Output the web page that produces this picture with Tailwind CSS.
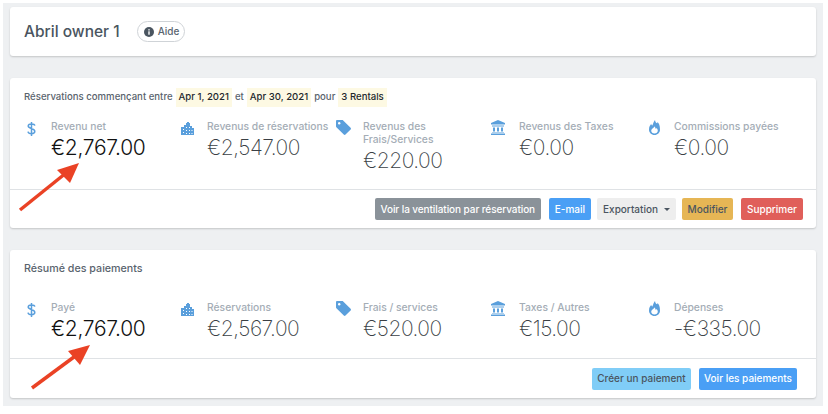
<!doctype html>
<html lang="fr">
<head>
<meta charset="utf-8">
<title>Abril owner 1</title>
<script src="https://cdn.jsdelivr.net/npm/@tailwindcss/browser@4"></script>
</head>
<body class="bg-white">
<div class="relative w-[828px] h-[414px] overflow-hidden bg-white font-['Inter',sans-serif]">
  <main class="ml-[3px] mt-[3px] w-[820px] h-[403px] bg-[#eef0f2] pl-[7px] pr-[7px] pt-[4px]">

    <!-- header -->
    <section class="h-[49px] rounded-[3px] bg-white shadow-[0_1px_2px_rgba(0,0,0,0.18)] flex items-center pl-[14px]">
      <h1 class="text-[15.5px] font-medium text-[#4a5560] leading-none">Abril owner 1</h1>
      <span class="ml-[17px] h-[21px] w-[48px] pl-[6px] rounded-full border border-[#cfd3d7] flex items-center gap-[4px] text-[10px] font-medium text-[#5a6570]">
        <svg class="w-[10px] h-[10px]" viewBox="0 0 10 10"><circle cx="5" cy="5" r="5" fill="#4a5560"/><rect x="4.3" y="4.3" width="1.4" height="3.4" fill="#fff"/><rect x="4.3" y="2.2" width="1.4" height="1.3" fill="#fff"/></svg>
        Aide
      </span>
    </section>

    <!-- reservations -->
    <section class="mt-[22px] h-[150px] rounded-[3px] bg-white shadow-[0_1px_2px_rgba(0,0,0,0.18)] flex flex-col">
      <div class="h-[112px] border-b border-[#dfe2e5] pl-[14px]">
        <p class="pt-[10px] flex items-center text-[9.6px] font-medium text-[#59636d] h-[29px]">
          <span>Réservations commençant entre</span>
          <span class="ml-[3px] px-[3px] py-[2px] bg-[#fdf9e3] text-[#23282d]">Apr 1, 2021</span>
          <span class="mx-[3px]">et</span>
          <span class="px-[3px] py-[2px] bg-[#fdf9e3] text-[#23282d]">Apr 30, 2021</span>
          <span class="mx-[3px]">pour</span>
          <span class="px-[3px] py-[2px] bg-[#fdf9e3] text-[#23282d]">3 Rentals</span>
        </p>
        <div class="mt-[13px] flex">
          <div class="w-[156px] flex">
            <div class="w-[27px] pl-[3px] pt-[2px]"><svg class="w-[9px] h-[14px]" viewBox="0 0 9 14"><path d="M7.8 3.6C7.6 2.4 6.3 1.900 4.500 1.900 2.600 1.900 1.200 2.700 1.200 4.100c0 3 6.600 1.600 6.600 5.200 0 1.500-1.500 2.400-3.300 2.400-1.900 0-3.200-.7-3.500-2.100M4.500 0v14" fill="none" stroke="#5a9fdc" stroke-width="1.500"/></svg></div>
            <div><p class="text-[10.3px] font-medium text-[#a4adb6] leading-[13px]">Revenu net</p><p class="mt-[1px] text-[21px] font-light text-[#111] leading-[28px] tracking-[-0.3px]">€2,767.00</p></div>
          </div>
          <div class="w-[156px] flex">
            <div class="w-[27px] pl-[1px] pt-[2px]"><svg class="w-[13px] h-[13px]" viewBox="0 0 13 13"><path fill="#5a9fdc" d="M0 5h3V3h2V1h1V0h2v1h1v3h2v2h2v7H0z"/><path fill="#fff" d="M2 7h1v1H2zm0 3h1v1H2zm3-5h1v1H5zm0 3h1v1H5zm0 3h1v1H5zm3-6h1v1H8zm0 3h1v1H8zm0 3h1v1H8zm2.500-3h1v1h-1zm0 3h1v1h-1z"/></svg></div>
            <div><p class="text-[10.3px] font-medium text-[#a4adb6] leading-[13px] whitespace-nowrap">Revenus de réservations</p><p class="mt-[1px] text-[21px] font-extralight text-[#3a3f45] leading-[28px] tracking-[-0.5px]">€2,547.00</p></div>
          </div>
          <div class="w-[155px] flex">
            <div class="w-[27px]"><svg class="w-[15px] h-[15px]" viewBox="0 0 15 15"><path fill="#5a9fdc" d="M0 1.200C0 .5.500 0 1.200 0h5c.4 0 .7.100 1 .4l7.400 7.400c.5.500.5 1.200 0 1.700l-5.100 5.100c-.5.500-1.200.5-1.700 0L.4 7.200C.1 6.900 0 6.600 0 6.200z"/><circle cx="3.200" cy="3.200" r="1.200" fill="#fff"/></svg></div>
            <div><p class="text-[10.3px] font-medium text-[#a4adb6] leading-[13px]">Revenus des<br>Frais/Services</p><p class="mt-[1px] text-[21px] font-extralight text-[#3a3f45] leading-[28px] tracking-[-0.5px]">€220.00</p></div>
          </div>
          <div class="w-[156px] flex">
            <div class="w-[28px]"><svg class="w-[14px] h-[15px]" viewBox="0 0 14 15"><path fill="#5a9fdc" d="M7 0l7 3v1.500H0V3zM1 5.500h12v1H1zM2 7.500h2v4H2zM6 7.500h2v4H6zM10 7.500h2v4h-2zM1 12.500h12V13H1zM0 13.500h14V15H0z"/></svg></div>
            <div><p class="text-[10.3px] font-medium text-[#a4adb6] leading-[13px]">Revenus des Taxes</p><p class="mt-[1px] text-[21px] font-extralight text-[#3a3f45] leading-[28px] tracking-[-0.5px]">€0.00</p></div>
          </div>
          <div class="flex">
            <div class="w-[27px] pl-[2px]"><svg class="w-[11px] h-[15px]" viewBox="0 0 11 15"><path fill="#5a9fdc" fill-rule="evenodd" d="M6 0c.3 2.400 1.400 3 2.200 3.300L8.600 2C10 3.500 11 5.500 11 9.500 11 12.600 8.600 15 5.500 15S0 12.600 0 9.500C0 6.500 1.200 5.400 2.200 3.800c.2 1 .6 1.500 1.200 1.800C4 3.800 4.700 1.500 6 0zM5.800 6.500C4.500 8 2.200 9 2.200 10.800c0 1.600 1.500 2.700 3.300 2.700s3.300-1.100 3.300-2.700c0-1.300-.6-2.300-1.200-2.900l-.6 1.100c-.6-.6-1-1.400-1-2.500z"/></svg></div>
            <div><p class="text-[10.3px] font-medium text-[#a4adb6] leading-[13px]">Commissions payées</p><p class="mt-[1px] text-[21px] font-extralight text-[#3a3f45] leading-[28px] tracking-[-0.5px]">€0.00</p></div>
          </div>
        </div>
      </div>
      <div class="flex-1 flex items-center justify-end gap-[6px] pr-[13px] text-[10px] font-medium">
        <span class="h-[22px] w-[166px] justify-center rounded-[2px] bg-[#8a9299] text-white flex items-center tracking-[-0.08px] mr-[2px]">Voir la ventilation par réservation</span>
        <span class="h-[22px] px-[6px] rounded-[2px] bg-[#4a9ff5] text-white flex items-center">E-mail</span>
        <span class="h-[22px] pl-[6px] pr-[6px] rounded-[2px] bg-[#eeeeee] text-[#4a5560] flex items-center gap-[6px]">Exportation <i class="block w-0 h-0 border-x-[3px] border-x-transparent border-t-[3px] border-t-[#4a5560]"></i></span>
        <span class="h-[22px] w-[51px] justify-center rounded-[2px] bg-[#e6b655] text-[#4a5560] flex items-center mr-[2px]">Modifier</span>
        <span class="h-[22px] px-[6px] rounded-[2px] bg-[#e05f5a] text-white flex items-center">Supprimer</span>
      </div>
    </section>

    <!-- payments -->
    <section class="mt-[22px] h-[148px] rounded-[3px] bg-white shadow-[0_1px_2px_rgba(0,0,0,0.18)] flex flex-col">
      <div class="h-[109px] border-b border-[#dfe2e5] pl-[14px]">
        <p class="pt-[12px] text-[10.7px] font-medium text-[#59636d] leading-[13px]">Résumé des paiements</p>
        <div class="mt-[26px] flex">
          <div class="w-[156px] flex">
            <div class="w-[27px] pl-[3px] pt-[2px]"><svg class="w-[9px] h-[14px]" viewBox="0 0 9 14"><path d="M7.8 3.6C7.6 2.4 6.3 1.900 4.500 1.900 2.600 1.900 1.200 2.700 1.200 4.100c0 3 6.600 1.600 6.600 5.200 0 1.500-1.500 2.400-3.300 2.400-1.900 0-3.200-.7-3.500-2.100M4.500 0v14" fill="none" stroke="#5a9fdc" stroke-width="1.500"/></svg></div>
            <div><p class="text-[10.3px] font-medium text-[#a4adb6] leading-[13px]">Payé</p><p class="mt-[1px] text-[21px] font-light text-[#111] leading-[28px] tracking-[-0.3px]">€2,767.00</p></div>
          </div>
          <div class="w-[156px] flex">
            <div class="w-[27px] pl-[1px] pt-[2px]"><svg class="w-[13px] h-[13px]" viewBox="0 0 13 13"><path fill="#5a9fdc" d="M0 5h3V3h2V1h1V0h2v1h1v3h2v2h2v7H0z"/><path fill="#fff" d="M2 7h1v1H2zm0 3h1v1H2zm3-5h1v1H5zm0 3h1v1H5zm0 3h1v1H5zm3-6h1v1H8zm0 3h1v1H8zm0 3h1v1H8zm2.500-3h1v1h-1zm0 3h1v1h-1z"/></svg></div>
            <div><p class="text-[10.3px] font-medium text-[#a4adb6] leading-[13px]">Réservations</p><p class="mt-[1px] text-[21px] font-extralight text-[#3a3f45] leading-[28px] tracking-[-0.5px]">€2,567.00</p></div>
          </div>
          <div class="w-[155px] flex">
            <div class="w-[27px]"><svg class="w-[15px] h-[15px]" viewBox="0 0 15 15"><path fill="#5a9fdc" d="M0 1.200C0 .5.500 0 1.200 0h5c.4 0 .7.100 1 .4l7.400 7.400c.5.500.5 1.200 0 1.700l-5.100 5.100c-.5.500-1.200.5-1.700 0L.4 7.200C.1 6.900 0 6.600 0 6.200z"/><circle cx="3.200" cy="3.200" r="1.200" fill="#fff"/></svg></div>
            <div><p class="text-[10.3px] font-medium text-[#a4adb6] leading-[13px]">Frais / services</p><p class="mt-[1px] text-[21px] font-extralight text-[#3a3f45] leading-[28px] tracking-[-0.5px]">€520.00</p></div>
          </div>
          <div class="w-[156px] flex">
            <div class="w-[28px]"><svg class="w-[14px] h-[15px]" viewBox="0 0 14 15"><path fill="#5a9fdc" d="M7 0l7 3v1.500H0V3zM1 5.500h12v1H1zM2 7.500h2v4H2zM6 7.500h2v4H6zM10 7.500h2v4h-2zM1 12.500h12V13H1zM0 13.500h14V15H0z"/></svg></div>
            <div><p class="text-[10.3px] font-medium text-[#a4adb6] leading-[13px]">Taxes / Autres</p><p class="mt-[1px] text-[21px] font-extralight text-[#3a3f45] leading-[28px] tracking-[-0.5px]">€15.00</p></div>
          </div>
          <div class="flex">
            <div class="w-[27px] pl-[2px]"><svg class="w-[11px] h-[15px]" viewBox="0 0 11 15"><path fill="#5a9fdc" fill-rule="evenodd" d="M6 0c.3 2.400 1.400 3 2.200 3.300L8.600 2C10 3.500 11 5.500 11 9.500 11 12.600 8.600 15 5.500 15S0 12.600 0 9.500C0 6.500 1.200 5.400 2.200 3.800c.2 1 .6 1.500 1.200 1.800C4 3.800 4.700 1.500 6 0zM5.800 6.500C4.500 8 2.200 9 2.200 10.800c0 1.600 1.500 2.700 3.300 2.700s3.300-1.100 3.300-2.700c0-1.300-.6-2.300-1.200-2.900l-.6 1.100c-.6-.6-1-1.400-1-2.500z"/></svg></div>
            <div><p class="text-[10.3px] font-medium text-[#a4adb6] leading-[13px]">Dépenses</p><p class="mt-[1px] text-[21px] font-extralight text-[#3a3f45] leading-[28px] tracking-[-0.5px]">-€335.00</p></div>
          </div>
        </div>
      </div>
      <div class="flex-1 flex items-center justify-end gap-[8px] pr-[19px] text-[10px] font-medium">
        <span class="h-[22px] w-[99px] justify-center rounded-[2px] bg-[#80cdf7] text-[#4a5560] flex items-center">Créer un paiement</span>
        <span class="h-[22px] w-[98px] justify-center rounded-[2px] bg-[#4a9ff5] text-white flex items-center">Voir les paiements</span>
      </div>
    </section>
  </main>

  <!-- annotation arrows -->
  <svg class="absolute left-0 top-0 pointer-events-none" width="828" height="414" viewBox="0 0 828 414">
    <path d="M20 210L66 173" stroke="#ea4225" stroke-width="3.500" fill="none"/>
    <path d="M79 163L57 170L70 183Z" fill="#ea4225"/>
    <path d="M32 388L78 354" stroke="#ea4225" stroke-width="3.500" fill="none"/>
    <path d="M90 345L68 351L80 365Z" fill="#ea4225"/>
  </svg>
</div>
</body>
</html>
